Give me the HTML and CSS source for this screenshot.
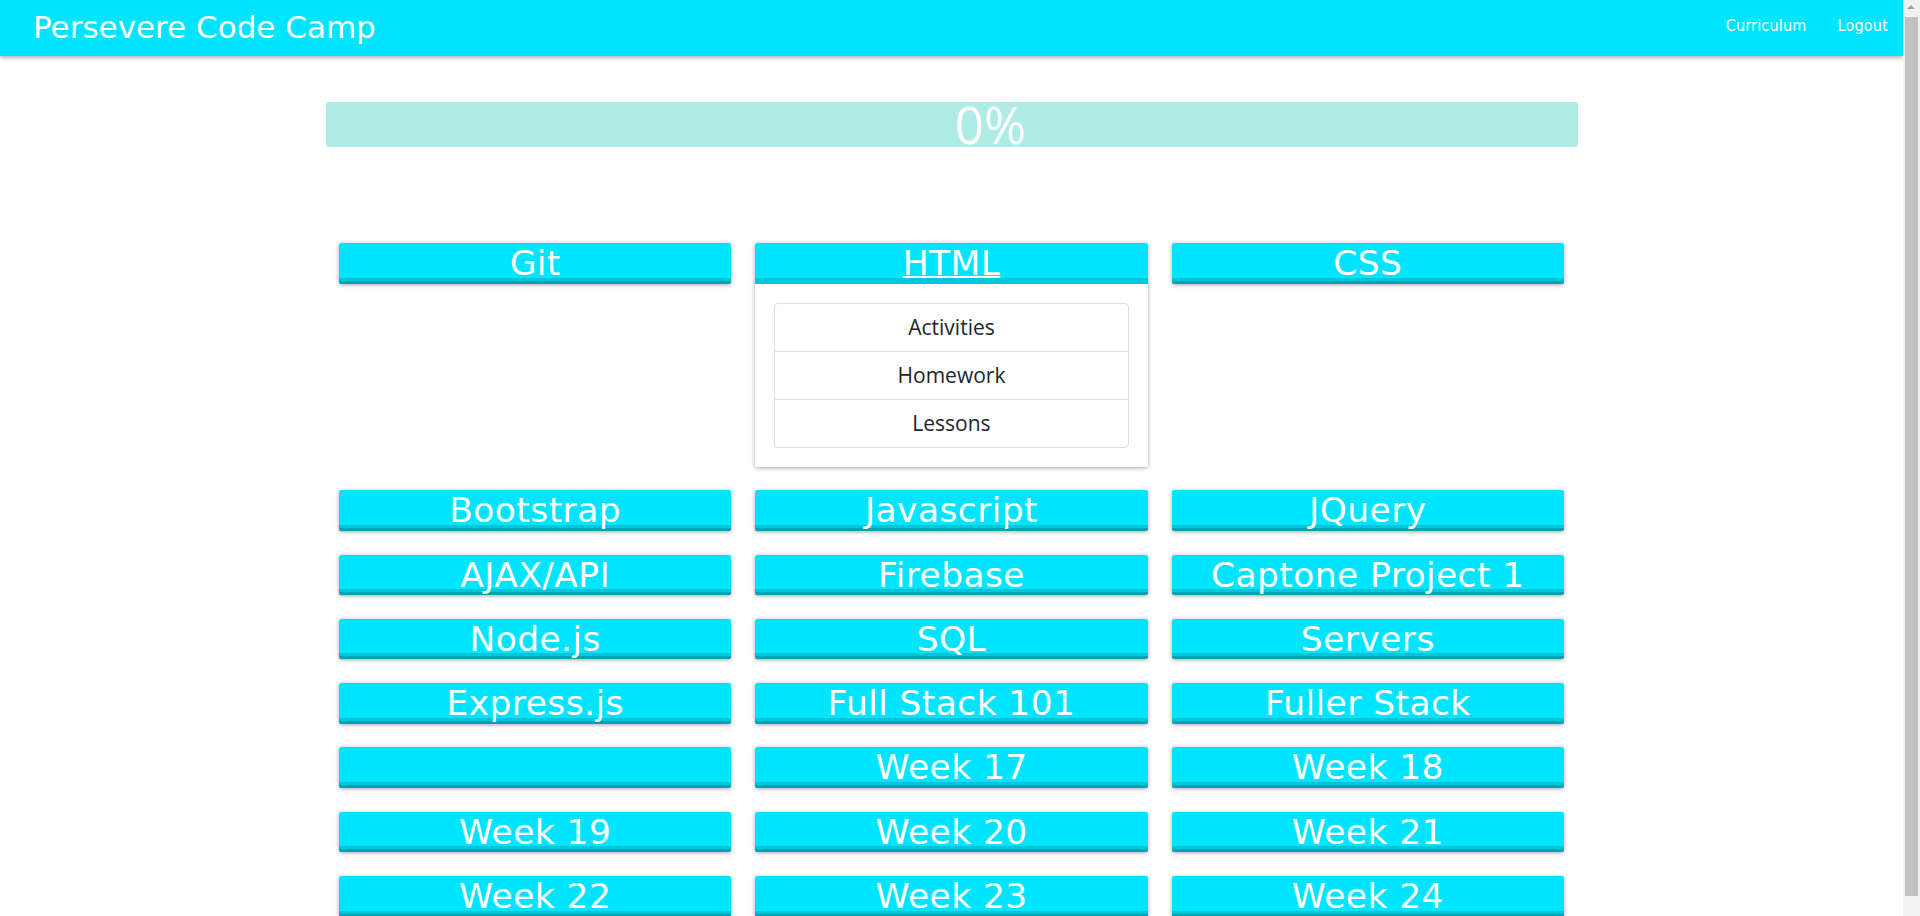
FILE: index.html
```html
<!DOCTYPE html>
<html lang="en">
<head>
<meta charset="utf-8">
<title>Persevere Code Camp</title>
<link rel="stylesheet" href="styles.css">
</head>
<body>
<nav class="navbar">
  <a class="brand" href="#">Persevere Code Camp</a>
  <div class="nav-links">
    <a href="#">Curriculum</a>
    <a href="#">Logout</a>
  </div>
</nav>
<main class="container">
  <div class="progress"><span class="progress-label">0%</span></div>
  <div class="grid">
    <div class="card"><div class="card-head">Git</div></div>
    <div class="card open">
      <div class="card-head"><a href="#">HTML</a></div>
      <div class="card-body">
        <ul class="list-group">
          <li>Activities</li>
          <li>Homework</li>
          <li>Lessons</li>
        </ul>
      </div>
    </div>
    <div class="card"><div class="card-head">CSS</div></div>

    <div class="card"><div class="card-head">Bootstrap</div></div>
    <div class="card"><div class="card-head">Javascript</div></div>
    <div class="card"><div class="card-head">JQuery</div></div>

    <div class="card"><div class="card-head">AJAX/API</div></div>
    <div class="card"><div class="card-head">Firebase</div></div>
    <div class="card"><div class="card-head">Captone Project 1</div></div>

    <div class="card"><div class="card-head">Node.js</div></div>
    <div class="card"><div class="card-head">SQL</div></div>
    <div class="card"><div class="card-head">Servers</div></div>

    <div class="card"><div class="card-head">Express.js</div></div>
    <div class="card"><div class="card-head">Full Stack 101</div></div>
    <div class="card"><div class="card-head">Fuller Stack</div></div>

    <div class="card"><div class="card-head"></div></div>
    <div class="card"><div class="card-head">Week 17</div></div>
    <div class="card"><div class="card-head">Week 18</div></div>

    <div class="card"><div class="card-head">Week 19</div></div>
    <div class="card"><div class="card-head">Week 20</div></div>
    <div class="card"><div class="card-head">Week 21</div></div>

    <div class="card"><div class="card-head">Week 22</div></div>
    <div class="card"><div class="card-head">Week 23</div></div>
    <div class="card"><div class="card-head">Week 24</div></div>
  </div>
</main>
<div class="scrollbar" aria-hidden="true">
  <div class="scroll-arrow"></div>
  <div class="scroll-thumb"></div>
</div>
</body>
</html>
```
FILE: styles.css
```css
html, body {
  margin: 0;
  padding: 0;
  background: #ffffff;
}

body {
  font-family: "DejaVu Sans", Verdana, sans-serif;
  padding-right: 17px;
}

.navbar {
  height: 56px;
  background: #00e5ff;
  box-shadow: 0 2px 4px rgba(0, 0, 0, 0.3);
  display: flex;
  align-items: center;
  justify-content: space-between;
  padding: 0 15px 0 33px;
  position: relative;
  z-index: 2;
}

.brand {
  color: #ffffff;
  text-decoration: none;
  font-family: "DejaVu Sans", Verdana, sans-serif;
  font-size: 31px;
  line-height: 56px;
  padding-bottom: 3px;
}

.nav-links {
  display: flex;
  gap: 31px;
}

.nav-links a {
  color: #ffffff;
  text-decoration: none;
  font-family: "DejaVu Sans Condensed", "DejaVu Sans", sans-serif;
  font-stretch: condensed;
  font-size: 16px;
  letter-spacing: 0.2px;
  line-height: 56px;
  padding-bottom: 4px;
}

.container {
  width: 1252px;
  margin: 0 auto;
}

.progress {
  margin-top: 46px;
  height: 45px;
  background: #afece6;
  border-radius: 3px;
  display: flex;
  justify-content: center;
  padding-left: 78px;
}

.progress-label {
  color: #ffffff;
  font-family: "Open Sans", "Noto Sans", sans-serif;
  font-size: 51px;
  line-height: 45px;
}

.grid {
  margin-top: 96px;
  padding: 0 13.5px;
  display: grid;
  grid-template-columns: repeat(3, 1fr);
  column-gap: 24px;
  row-gap: 23.8px;
  align-items: start;
}

.card {
  background: #ffffff;
  box-shadow: 0 1px 4px rgba(0, 0, 0, 0.35);
  border-radius: 2px;
  border-bottom: 3px solid #00a2b3;
}

.card-head {
  height: 34.5px;
  line-height: 41px;
  background: #00e5ff;
  border-bottom: 3px solid #00c6da;
  color: #ffffff;
  text-align: center;
  font-family: "DejaVu Sans", Verdana, sans-serif;
  font-size: 34.5px;
  letter-spacing: 0.4px;
  white-space: nowrap;
  border-radius: 2px 2px 0 0;
}

.card-head a {
  color: #ffffff;
  text-decoration: underline;
  text-decoration-thickness: 2px;
  text-underline-offset: 1px;
}

.card.open {
  border-bottom: none;
}

.card.open .card-head {
  border-bottom: 6px solid #00c8dc;
}

.card-body {
  padding: 19px 19px 19px;
}

.list-group {
  list-style: none;
  margin: 0;
  padding: 0;
  border: 1px solid #dedede;
  border-radius: 4px;
}

.list-group li {
  height: 47px;
  line-height: 47px;
  text-align: center;
  font-family: "Open Sans", "Noto Sans", sans-serif;
  font-size: 21px;
  color: #212529;
}

.list-group li + li {
  border-top: 1px solid #dedede;
}

/* classic browser scrollbar drawn over the right edge */
.scrollbar {
  position: fixed;
  top: 0;
  right: 0;
  width: 17px;
  height: 100vh;
  background: #f1f1f1;
  z-index: 5;
}

.scroll-arrow {
  position: absolute;
  top: 5px;
  left: 4px;
  width: 0;
  height: 0;
  border-left: 4.5px solid transparent;
  border-right: 4.5px solid transparent;
  border-bottom: 4px solid #a3a3a3;
}

.scroll-thumb {
  position: absolute;
  top: 17px;
  left: 2px;
  width: 13px;
  bottom: 20px;
  background: #c1c1c1;
}
```
